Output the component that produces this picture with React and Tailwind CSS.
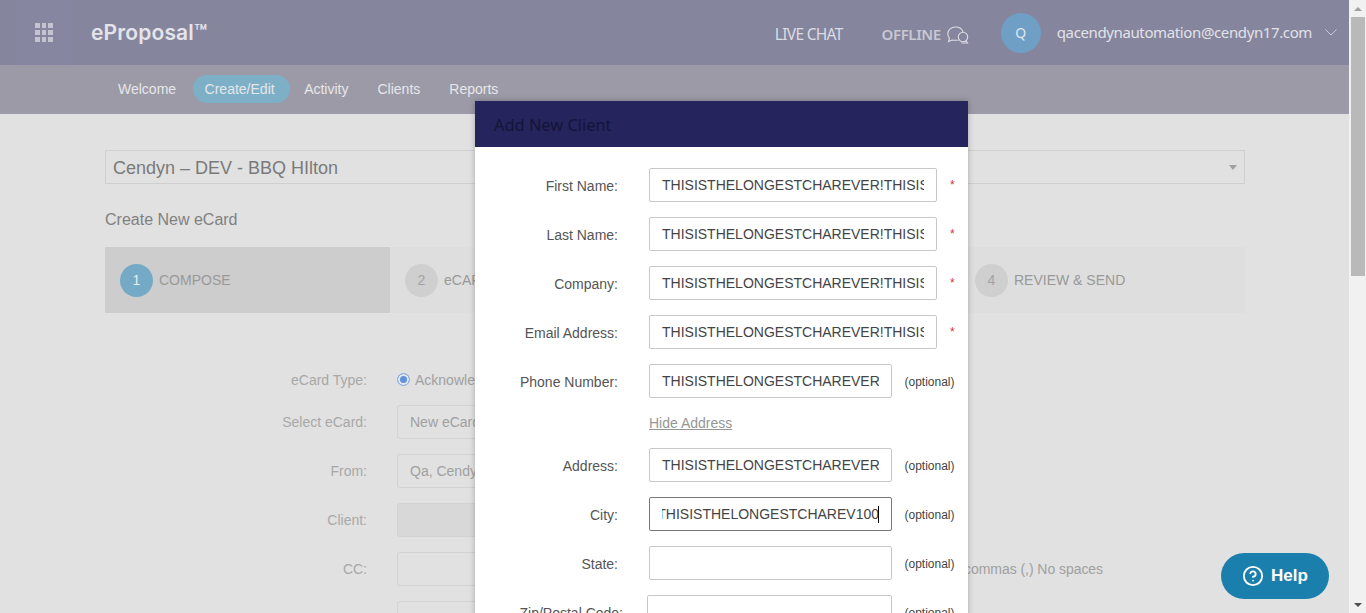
import React from 'react';
import { HelpCircle } from 'lucide-react';

const LONG = 'THISISTHELONGESTCHAREVER!THISISTHELONGESTCHAREVER';
const SHORT = 'THISISTHELONGESTCHAREVER';

function GridIcon() {
  return (
    <div className="grid grid-cols-3 gap-[2px] w-[18px]">
      {Array.from({ length: 9 }).map((_, i) => (
        <div key={i} className="h-[5px] bg-[#c4c4d0]" />
      ))}
    </div>
  );
}

function ChatIcon() {
  return (
    <svg width="22" height="18" viewBox="0 0 22 18" fill="none" stroke="#dcdce4" strokeWidth="1.1">
      <path d="M11.500 14.300H7.500c-1 0-1.700-.1-2.400-.3L1.500 15.500l1-3.200C1.400 11 .8 9.500.8 7.800.8 3.900 4.300 1 8.500 1c3.600 0 6.600 2 7.500 5" />
      <circle cx="16" cy="11" r="4.700" />
      <path d="M19 14.500l1.600 2.500H14.500" />
    </svg>
  );
}

function Step({ num, label, active, className }) {
  return (
    <div className={`flex items-center gap-[6px] pl-[15px] ${active ? 'bg-[#cdcdcd]' : ''} ${className}`}>
      <div className={`w-[33px] h-[33px] rounded-full flex items-center justify-center text-sm ${active ? 'bg-[#74aac6] text-[#e6eef2]' : 'bg-[#cfcfcf] text-[#a3a3a3]'}`}>
        {num}
      </div>
      <span className="text-sm text-[#999999]">{label}</span>
    </div>
  );
}

function BgRow({ label, children }) {
  return (
    <div className="flex items-center h-[34px] mb-[15px]">
      <div className="w-[262px] text-right text-sm text-[#a8a8a8]">{label}</div>
      <div className="ml-[30px] flex-1">{children}</div>
    </div>
  );
}

function BgInput({ value, disabled }) {
  return (
    <div className={`w-[200px] h-[34px] border border-[#d2d2d2] rounded-[3px] pl-[12px] flex items-center text-sm text-[#a0a0a0] ${disabled ? 'bg-[#d8d8d8]' : ''}`}>
      {value}
    </div>
  );
}

function Field({ label, value, required, last, focused }) {
  const width = required ? 'w-[288px]' : 'w-[243px]';
  return (
    <div className={`flex items-center h-[34px] ${last ? '' : 'mb-[15px]'}`}>
      <label className="w-[143px] shrink-0 text-right text-sm text-[#555555] whitespace-nowrap pt-[2px]">{label}</label>
      {focused ? (
        <div className={`ml-[31px] ${width} h-[34px] border border-[#777777] rounded-[2px] px-[12px] flex items-center`}>
          <div className="w-full overflow-hidden flex justify-end items-center text-sm text-[#444444] whitespace-nowrap">
            <span className="shrink-0">{value}</span>
            <span className="shrink-0 w-px h-[17px] bg-black -ml-px" />
          </div>
        </div>
      ) : (
        <input
          readOnly
          value={value}
          className={`ml-[31px] ${width} h-[34px] border border-[#c8c8c8] rounded-[2px] px-[12px] text-sm text-[#444444] bg-white outline-none`}
        />
      )}
      {required ? (
        <span className="ml-[13px] text-xs text-[#d0343f]">*</span>
      ) : (
        <span className="ml-[12.500px] text-xs text-[#444444] whitespace-nowrap pt-[2px]">(optional)</span>
      )}
    </div>
  );
}

export default function App() {
  return (
    <div className="relative h-[613px] w-full overflow-hidden flex font-['Liberation_Sans',Arial,sans-serif] bg-[#e1e1e1]">
      <div className="flex-1 min-w-0">
        {/* Top bar */}
        <div className="h-[65px] bg-[#85859d] flex items-center">
          <div className="ml-[15px] w-[58px] h-full flex items-center justify-center bg-[#8686a0]">
            <GridIcon />
          </div>
          <div className="ml-[18px] text-[21px] font-semibold text-[#e4e4ea] font-['Inter',sans-serif] tracking-[0.15px]">eProposal™</div>
          <div className="ml-auto flex items-center font-['Noto_Sans',sans-serif] text-[#dcdce4]">
            <span className="text-[15.500px] tracking-[-0.7px] mr-[39px] mt-[4px]">LIVE CHAT</span>
            <span className="text-[15px] tracking-[-0.4px] font-semibold text-[#c8c8d4] mr-[6px] mt-[4px]">OFFLINE</span>
            <span className="mr-[32px] mt-[4px]"><ChatIcon /></span>
            <div className="w-[40px] h-[40px] rounded-full bg-[#6f9fc4] flex items-center justify-center text-sm text-[#dce8f0] mr-[16px]">Q</div>
            <span className="text-[15px] tracking-[-0.38px] text-[#e2e2e8] mr-[13px]">qacendynautomation@cendyn17.com</span>
            <svg width="12" height="7" viewBox="0 0 12 7" fill="none" stroke="#c8c8d4" strokeWidth="1" className="mr-[12px]">
              <path d="M.5.5 6 6l5.500-5.500" />
            </svg>
          </div>
        </div>

        {/* Sub nav */}
        <div className="h-[49px] bg-[#9c9aa6] flex items-center pl-[103.500px] pb-[1px] text-sm text-[#e6e6ea]">
          <span className="px-[14.500px]">Welcome</span>
          <span className="ml-[2px] bg-[#7dafc6] rounded-full pl-[12px] pr-[15px] h-[28px] flex items-center">Create/Edit</span>
          <span className="px-[14.500px]">Activity</span>
          <span className="px-[14.500px]">Clients</span>
          <span className="px-[14.500px]">Reports</span>
        </div>

        {/* Page behind the modal */}
        <div className="pl-[105px] pr-[104px] pt-[36px]">
          <div className="h-[34px] border border-[#cfcfcf] flex items-center justify-between pl-[7px] pr-[7px] pt-[1px] text-lg text-[#7a7a7a]">
            <span>Cendyn – DEV - BBQ HIlton</span>
            <span className="w-0 h-0 border-x-[4px] border-x-transparent border-t-[5px] border-t-[#a0a0a0]" />
          </div>
          <div className="mt-[25px] text-base text-[#808080] leading-[22px]">Create New eCard</div>
          <div className="mt-[16px] h-[66px] bg-[#dedede] flex">
            <Step num="1" label="COMPOSE" active className="w-[285px]" />
            <Step num="2" label="eCARD" className="w-[570px]" />
            <Step num="4" label="REVIEW & SEND" className="flex-1" />
          </div>

          <div className="mt-[50px]">
            <div className="flex items-center h-[34px] mb-[8px]">
              <div className="w-[262px] text-right text-sm text-[#a8a8a8]">eCard Type:</div>
              <div className="ml-[30px] flex items-center text-sm text-[#a0a0a0]">
                <span className="w-[13px] h-[13px] -mt-[2px] rounded-full border border-[#8fb0e0] bg-[#5f93dd] shadow-[inset_0_0_0_2px_#e8e8e8] mr-[5px]" />
                Acknowledgement
              </div>
            </div>
            <BgRow label="Select eCard:"><BgInput value="New eCard" /></BgRow>
            <BgRow label="From:"><BgInput value="Qa, Cendyn" /></BgRow>
            <BgRow label="Client:"><BgInput disabled /></BgRow>
            <BgRow label="CC:">
              <div className="flex items-center">
                <BgInput />
                <span className="ml-[367px] text-sm tracking-[-0.05px] text-[#a0a0a0] whitespace-nowrap">commas (,) No spaces</span>
              </div>
            </BgRow>
            <BgRow label=""><BgInput /></BgRow>
          </div>
        </div>
      </div>

      {/* Scrollbar */}
      <div className="w-[17px] shrink-0 bg-[#f1f1f1] flex flex-col items-center">
        <div className="h-[17px] flex items-center justify-center">
          <span className="w-0 h-0 border-x-[4px] border-x-transparent border-b-[4px] border-b-[#a0a0a0]" />
        </div>
        <div className="w-[14px] h-[259px] bg-[#b9b9b9]" />
        <div className="mt-auto h-[17px] flex items-center justify-center">
          <span className="w-0 h-0 border-x-[4px] border-x-transparent border-t-[4px] border-t-[#505050]" />
        </div>
      </div>

      {/* Modal */}
      <div className="absolute left-[475px] top-[101px] w-[493px] h-[540px] bg-white shadow-[0_0_6px_rgba(0,0,0,0.25)]">
        <div className="h-[46px] bg-[#26245c] flex items-center pl-[19px] pt-[2px] text-[16.400px] text-[#14143a] font-['Noto_Sans',sans-serif]">Add New Client</div>
        <div className="pt-[21px]">
          <Field label="First Name:" value={LONG} required />
          <Field label="Last Name:" value={LONG} required />
          <Field label="Company:" value={LONG} required />
          <Field label="Email Address:" value={LONG} required />
          <Field label="Phone Number:" value={SHORT} last />
          <div className="h-[50px] pl-[174px] flex items-center">
            <span className="text-sm text-[#969696] underline">Hide Address</span>
          </div>
          <Field label="Address:" value={SHORT} />
          <Field label="City:" value="THISISTHELONGESTCHAREV100" focused />
          <Field label="State:" value="" />
          <div className="flex items-center h-[34px]">
            <label className="w-[148px] shrink-0 text-right text-sm text-[#555555] whitespace-nowrap pt-[2px]">Zip/Postal Code:</label>
            <input readOnly className="ml-[24px] w-[245px] h-[34px] border border-[#c8c8c8] rounded-[2px] bg-white outline-none" />
            <span className="ml-[12.500px] text-xs text-[#444444] whitespace-nowrap pt-[2px]">(optional)</span>
          </div>
        </div>
      </div>

      {/* Help button */}
      <div className="absolute left-[1221px] top-[553px] w-[108px] h-[46px] rounded-full bg-[#1b7fae] flex items-center justify-center gap-[7px] text-white">
        <HelpCircle size={22} strokeWidth={2} />
        <span className="text-[17px] font-bold">Help</span>
      </div>
    </div>
  );
}
